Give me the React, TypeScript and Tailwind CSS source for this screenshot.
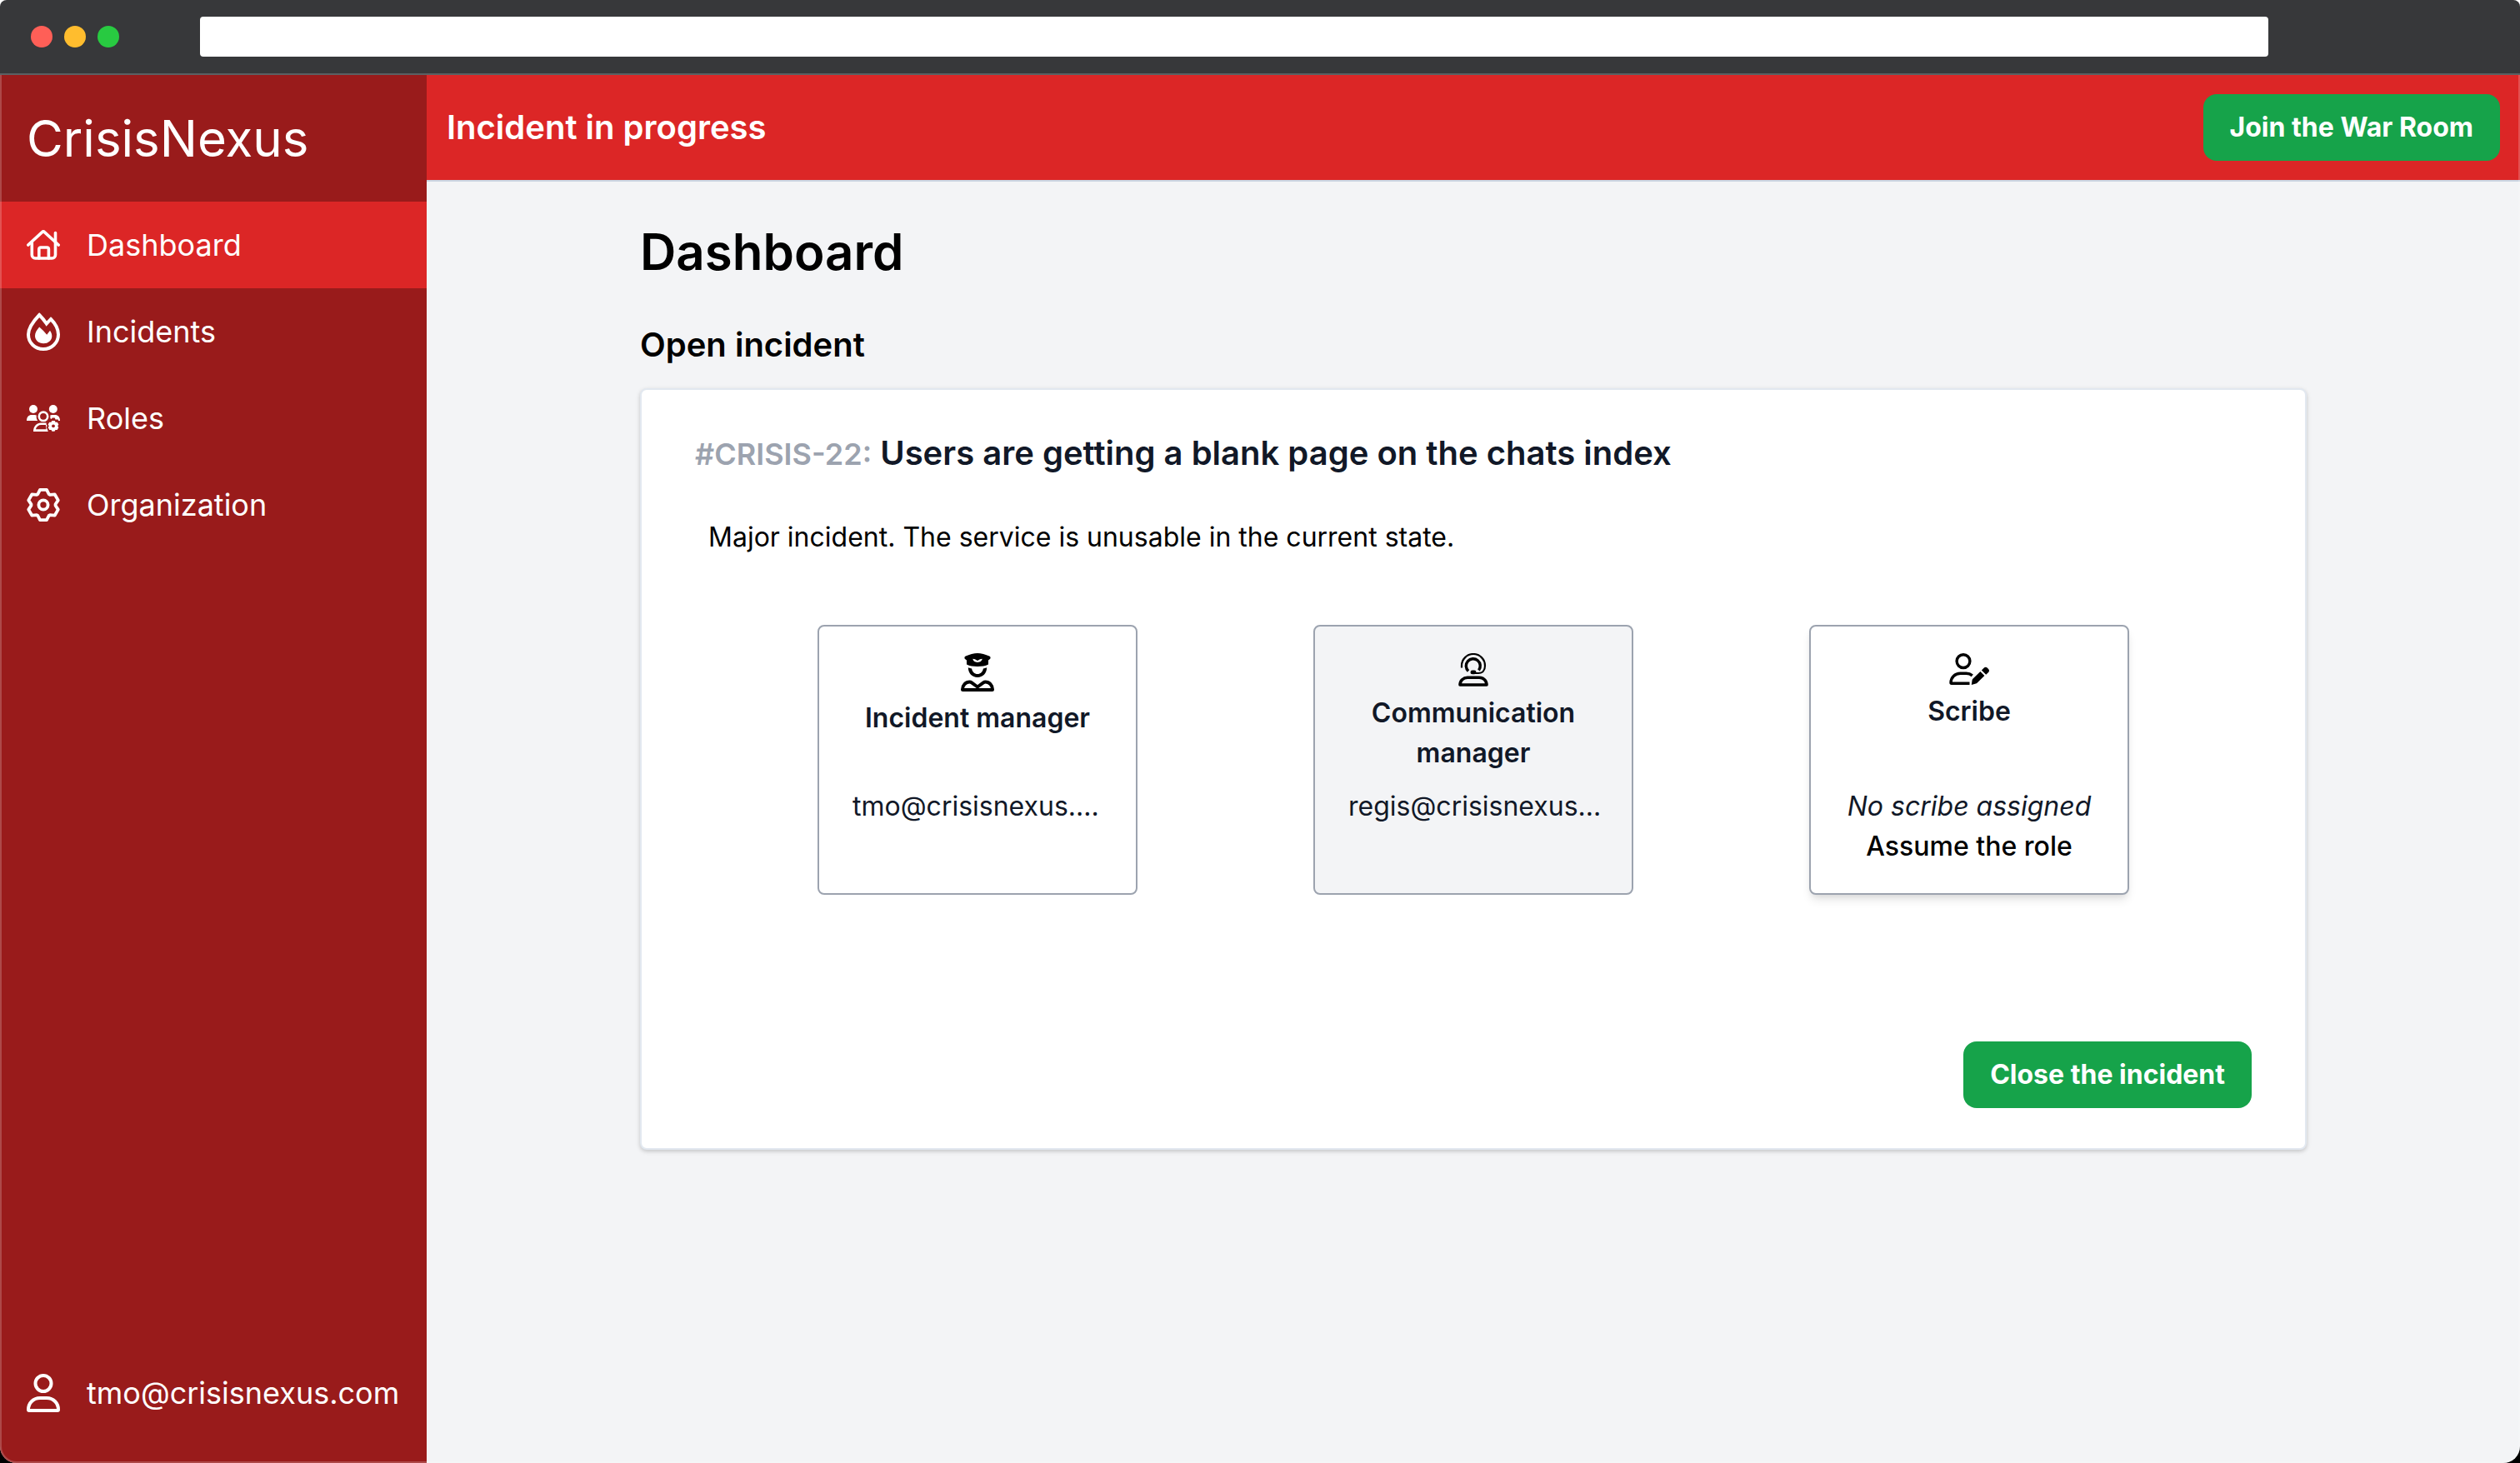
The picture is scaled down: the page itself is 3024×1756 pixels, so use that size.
import type { ReactNode } from "react";

function gearPath(cx: number, cy: number, tip: number, root: number, tipHalf: number, rootHalf: number) {
  const points: string[] = [];
  for (let k = 0; k < 6; k++) {
    const a = (k * Math.PI) / 3;
    const corners = [
      [-rootHalf, -root],
      [-tipHalf, -tip],
      [tipHalf, -tip],
      [rootHalf, -root],
    ];
    for (const [x, y] of corners) {
      const px = cx + x * Math.cos(a) - y * Math.sin(a);
      const py = cy + x * Math.sin(a) + y * Math.cos(a);
      points.push(`${px.toFixed(2)} ${py.toFixed(2)}`);
    }
  }
  return `M${points.join("L")}Z`;
}

function HomeIcon() {
  return (
    <svg width="40" height="36" viewBox="0 0 40 36" fill="none" stroke="currentColor" strokeWidth="3.6" strokeLinecap="round" strokeLinejoin="round" aria-hidden="true">
      <path d="M1.8 18 18.6 2.6a2 2 0 0 1 2.800 0L38.200 18" />
      <path d="M6.300 15v15a4 4 0 0 0 4 4h20.200a4 4 0 0 0 4-4V3.500" />
      <path d="M14.800 34V23a2 2 0 0 1 2-2h7.600a2 2 0 0 1 2 2v11" />
    </svg>
  );
}

function FlameIcon() {
  return (
    <svg width="40" height="46" viewBox="0 0 40 46" fill="none" aria-hidden="true">
      <path
        d="M15.2 3C9 9.500 2 18 2 26.500 2 36.500 10 44 20 44s18-7.500 18-17.500C38 20 33.500 12.500 29 8l-5.200 5.500Q20 7.800 15.200 3Z"
        stroke="currentColor"
        strokeWidth="4"
      />
      <path d="M15.200 17.500C12 21 10 24.500 10 28c0 5.500 4.500 9.300 10.200 9.300S30.300 33.500 30.300 28.500c0-2.500-.8-4.500-2.300-6.700l-3.800 5Q20 21.500 15.200 17.500Z" fill="currentColor" />
    </svg>
  );
}

function RolesIcon() {
  return (
    <svg width="40" height="32" viewBox="0 0 40 32" fill="currentColor" aria-hidden="true">
      <circle cx="8" cy="5" r="5" />
      <circle cx="31.800" cy="5" r="5" />
      <path d="M0 19v-.5C0 14.500 2.500 11.900 6 11.900h3.800c.7 0 1.400.2 2 .6-.4 2.400 0 4.600 1.400 6.500Z" />
      <path d="M40 19v-.5c0-4-2.500-6.600-6-6.600h-3.800c-.7 0-1.400.2-2 .6.3 1.500.3 2.400 0 3.600l1.600.8 1-1.400h2.800l1.200 2.200 2.400-.4 1 1.700Z" />
      <circle cx="20" cy="13.800" r="5.200" fill="none" stroke="currentColor" strokeWidth="2.600" />
      <path d="M25.800 32H8c0-6 3.800-10.500 9-10.500h6.500l.2 2.300 1 1.200-1 1.700 1 2.300ZM23 24H17.500c-3.200 0-5.800 2-6.600 5.300H23.500Z" fillRule="evenodd" />
      <path d={gearPath(32, 25.300, 5.800, 4.200, 1.300, 2)} stroke="currentColor" strokeWidth="1.200" strokeLinejoin="round" />
      <circle cx="32" cy="25.300" r="1.900" className="fill-[#991b1b]" />
    </svg>
  );
}

function GearIcon() {
  return (
    <svg width="40" height="42" viewBox="0 0 40 42" fill="none" stroke="currentColor" strokeWidth="3.800" strokeLinejoin="round" aria-hidden="true">
      <path d={gearPath(20, 21, 18.200, 13, 4, 6.600)} />
      <circle cx="20" cy="21" r="5.600" />
    </svg>
  );
}

function UserIcon() {
  return (
    <svg width="40" height="46" viewBox="0 0 40 46" fill="none" stroke="currentColor" strokeWidth="4" strokeLinejoin="round" aria-hidden="true">
      <circle cx="20" cy="11.500" r="9.500" />
      <path d="M2 43C2 35 8 29 16 29h8c8 0 14 6 14 14a1 1 0 0 1-1 1H3a1 1 0 0 1-1-1Z" />
    </svg>
  );
}

function OfficerIcon() {
  return (
    <svg width="40" height="46" viewBox="0 0 40 46" fill="none" className="text-black" aria-hidden="true">
      <path
        d="M20 0C16 0 10 1.700 5.800 3.400 4 4.200 4 6.200 5.400 7.200L7 8.500v5C10.500 15.300 15 16 20 16s9.500-.7 13-2.500v-5l1.600-1.300c1.400-1 1.400-3-.4-3.800C30 1.700 24 0 20 0Z"
        fill="currentColor"
      />
      <path d="M14.300 6.800c2 .1 3.400.6 4.400 1.500.8.7 1.800.7 2.600 0 1-.9 2.400-1.400 4.400-1.500-.2 2.200-2.400 4.200-5.700 4.200s-5.500-2-5.700-4.200Z" className="fill-white" />
      <path d="M8.800 17.200c1.500.6 3 1 4.300 1.200.7 3.900 3.300 6.500 6.900 6.500s6.200-2.600 6.900-6.500c1.300-.2 2.800-.6 4.300-1.200C31 24 26.500 28.900 20 28.900S9 24 8.800 17.200Z" fill="currentColor" />
      <path d="M2 43.500C2 38.500 5.800 34.500 10.600 34.500c1 0 1.600.3 2.400.9l7 5.100 7-5.100c.8-.6 1.400-.9 2.400-.9 4.800 0 8.600 4 8.600 9 0 .3-.2.5-.5.500h-35a.5.5 0 0 1-.5-.5Z" stroke="currentColor" strokeWidth="4" strokeLinejoin="round" />
    </svg>
  );
}

function HeadsetIcon() {
  return (
    <svg width="36" height="40" viewBox="0 0 36 40" fill="none" stroke="currentColor" className="text-black" aria-hidden="true">
      <path d="M4 17.500V15a14 14 0 0 1 28 0c0 5.500-3 9-8 9h-6" strokeWidth="2.200" />
      <path d="M12 21.500A8.500 8.500 0 1 1 24.500 20.500" strokeWidth="3.400" />
      <rect x="14.500" y="20.500" width="7" height="4.800" rx="2.400" fill="currentColor" stroke="none" />
      <path d="M2 38C2 33 6 29.300 11 29.300h14c5 0 9 3.700 9 8.700Z" strokeWidth="3.600" strokeLinejoin="round" />
    </svg>
  );
}

function ScribeIcon() {
  return (
    <svg width="48" height="38" viewBox="0 0 48 38" fill="none" className="text-black" aria-hidden="true">
      <circle cx="17" cy="9.600" r="7.900" stroke="currentColor" strokeWidth="3.400" />
      <path d="M24.500 36.200H2.600a.6.6 0 0 1-.6-.6C2 29.200 7 24.300 13.400 24.300h7.200c2.800 0 5.200.9 7.200 2.500" stroke="currentColor" strokeWidth="3.400" />
      <path d="M26.800 38l.8-5.800c.1-.6.4-1.100.8-1.500l9-8.800 5 5-8.900 8.900c-.4.400-.9.700-1.500.8Z" fill="currentColor" />
      <path d="m38.900 20.500 2.700-2.700c1.300-1.300 3.100-1.300 4.300 0l1.200 1.100c1.200 1.200 1.200 3 0 4.200l-2.900 2.700Z" fill="currentColor" />
    </svg>
  );
}

function NavItem({ icon, label, active }: { icon: ReactNode; label: string; active?: boolean }) {
  return (
    <a href="#" aria-current={active ? "page" : undefined} className={`flex h-[104px] items-center gap-8 px-8 ${active ? "bg-[#dc2626]" : ""}`}>
      <span className="flex w-10 shrink-0 justify-center">{icon}</span>
      <span className="text-4xl">{label}</span>
    </a>
  );
}

function RoleCard({ icon, title, className, children }: { icon: ReactNode; title: string; className: string; children: ReactNode }) {
  return (
    <section className={`w-96 rounded-lg border-2 border-[#9ca3af] px-10 py-8 text-center text-[32px] leading-[48px] text-[#111827] ${className}`}>
      <div className="flex h-40 flex-col items-center gap-2">
        {icon}
        <h3 className="font-semibold">{title}</h3>
      </div>
      <div className="h-24">{children}</div>
    </section>
  );
}

export default function App() {
  return (
    <div className="flex min-h-screen flex-col bg-black font-[Inter,sans-serif]">
      <div className="bg-white">
        <div className="flex h-[90px] items-center rounded-t-lg border-b-2 border-[#5b6063] bg-[#37383a] pr-[302px] pl-[37px]">
          <div className="flex w-[203px] shrink-0 gap-3.5">
            <span className="size-[26px] rounded-full bg-[#ff5f57]" />
            <span className="size-[26px] rounded-full bg-[#ffbd2e]" />
            <span className="size-[26px] rounded-full bg-[#28ca41]" />
          </div>
          <input type="text" aria-label="Address" className="h-12 min-w-0 flex-1 rounded bg-white px-4 text-2xl outline-none" />
        </div>
      </div>

      <div className="relative flex flex-1 overflow-hidden rounded-b-[20px] bg-[#f3f4f6]">
        <aside className="flex w-[512px] shrink-0 flex-col bg-[#991b1b] pb-8 text-white">
          <div className="px-8 py-10 text-6xl leading-[72px]">CrisisNexus</div>
          <nav className="flex flex-col">
            <NavItem icon={<HomeIcon />} label="Dashboard" active />
            <NavItem icon={<FlameIcon />} label="Incidents" />
            <NavItem icon={<RolesIcon />} label="Roles" />
            <NavItem icon={<GearIcon />} label="Organization" />
          </nav>
          <div className="mt-auto">
            <NavItem icon={<UserIcon />} label="tmo@crisisnexus.com" />
          </div>
        </aside>

        <div className="flex min-w-0 flex-1 flex-col">
          <header className="flex h-32 items-center justify-between border-b-2 border-[#cbd5e1] bg-[#dc2626] px-6 text-white">
            <p className="text-[40px] leading-[56px] font-semibold">Incident in progress</p>
            <button type="button" className="rounded-2xl bg-[#16a34a] px-8 py-4 text-[32px] leading-[48px] font-bold">
              Join the War Room
            </button>
          </header>

          <main className="mx-auto w-full max-w-[2000px] pt-12">
            <h1 className="text-6xl leading-[72px] font-semibold text-black">Dashboard</h1>
            <h2 className="mt-12 text-[40px] leading-[56px] font-semibold text-black">Open incident</h2>

            <article className="mt-6 rounded-lg border-2 border-[#e2e8f0] bg-white py-12 shadow-[0_2px_6px_rgba(0,0,0,0.1),0_2px_4px_rgba(0,0,0,0.1)]">
              <h3 className="px-16 text-[40px] leading-[56px] font-semibold text-[#111827]">
                <span className="text-4xl leading-[56px] text-[#9ca3af]">#CRISIS-22:</span> Users are getting a blank page on the chats index
              </h3>
              <p className="mt-12 px-20 text-[32px] leading-[48px] text-black">Major incident. The service is unusable in the current state.</p>

              <div className="mt-[81px] flex justify-evenly">
                <RoleCard icon={<OfficerIcon />} title="Incident manager" className="bg-white">
                  <p className="text-left whitespace-nowrap">tmo@crisisnexus....</p>
                </RoleCard>
                <RoleCard icon={<HeadsetIcon />} title="Communication manager" className="bg-[#f3f4f6]">
                  <p className="text-left whitespace-nowrap">regis@crisisnexus...</p>
                </RoleCard>
                <RoleCard icon={<ScribeIcon />} title="Scribe" className="bg-white shadow-[0_8px_12px_-2px_rgba(0,0,0,0.1),0_4px_8px_-4px_rgba(0,0,0,0.1)]">
                  <p className="italic">No scribe assigned</p>
                  <button type="button" className="font-medium text-black">
                    Assume the role
                  </button>
                </RoleCard>
              </div>

              <div className="mt-44 flex justify-end px-16">
                <button type="button" className="rounded-2xl bg-[#16a34a] px-8 py-4 text-[32px] leading-[48px] font-bold text-white">
                  Close the incident
                </button>
              </div>
            </article>
          </main>
        </div>
        <div className="pointer-events-none absolute inset-0 rounded-b-[20px] border-x-2 border-b-2 border-white/20" />
      </div>
    </div>
  );
}
